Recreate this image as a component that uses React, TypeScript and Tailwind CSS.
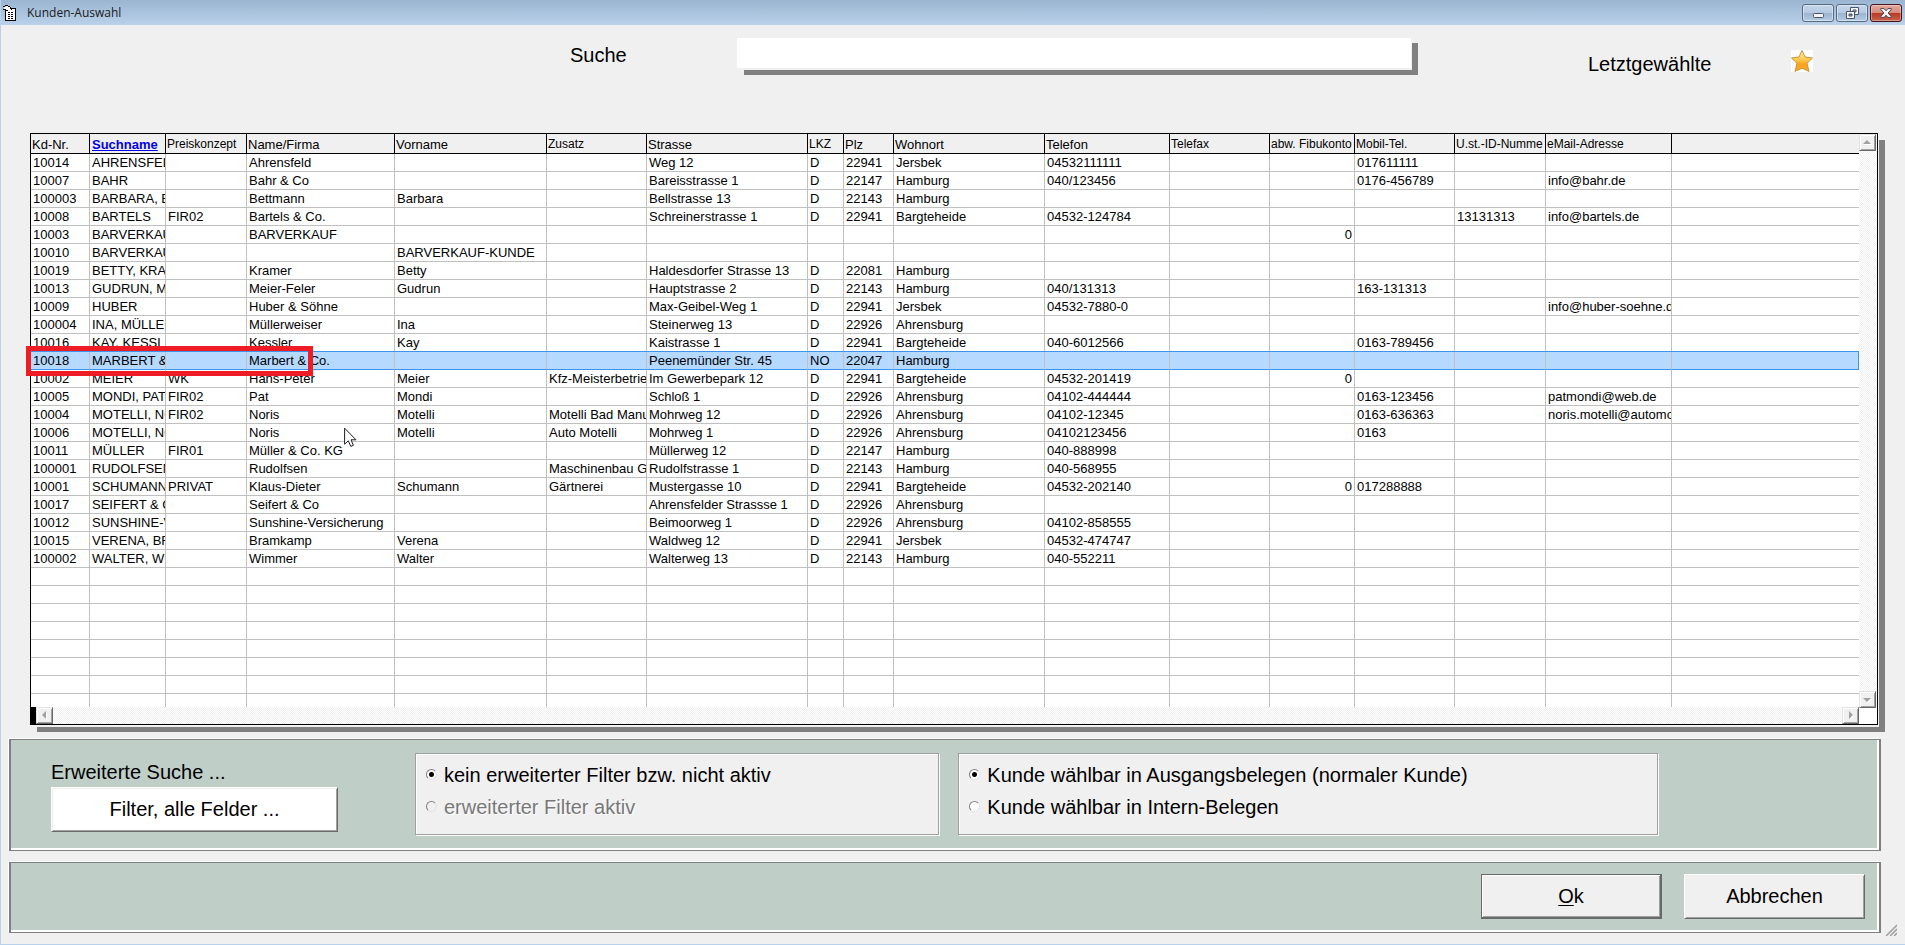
import React from 'react';

type Column = { title: string; width: string; small?: boolean; sorted?: boolean; right?: boolean };

const columns: Column[] = [
  { title: 'Kd-Nr.', width: 'w-[59px]' },
  { title: 'Suchname', width: 'w-[76px]', sorted: true },
  { title: 'Preiskonzept', width: 'w-[81px]', small: true },
  { title: 'Name/Firma', width: 'w-[148px]' },
  { title: 'Vorname', width: 'w-[152px]' },
  { title: 'Zusatz', width: 'w-[100px]', small: true },
  { title: 'Strasse', width: 'w-[161px]' },
  { title: 'LKZ', width: 'w-[36px]', small: true },
  { title: 'Plz', width: 'w-[50px]' },
  { title: 'Wohnort', width: 'w-[151px]' },
  { title: 'Telefon', width: 'w-[125px]' },
  { title: 'Telefax', width: 'w-[100px]', small: true },
  { title: 'abw. Fibukonto', width: 'w-[85px]', small: true, right: true },
  { title: 'Mobil-Tel.', width: 'w-[100px]', small: true },
  { title: 'U.st.-ID-Numme', width: 'w-[91px]', small: true },
  { title: 'eMail-Adresse', width: 'w-[126px]', small: true },
];

const customers: string[][] = [
  ['10014', 'AHRENSFELD', '', 'Ahrensfeld', '', '', 'Weg 12', 'D', '22941', 'Jersbek', '04532111111', '', '', '017611111', '', ''],
  ['10007', 'BAHR', '', 'Bahr & Co', '', '', 'Bareisstrasse 1', 'D', '22147', 'Hamburg', '040/123456', '', '', '0176-456789', '', 'info@bahr.de'],
  ['100003', 'BARBARA, BETTMANN', '', 'Bettmann', 'Barbara', '', 'Bellstrasse 13', 'D', '22143', 'Hamburg', '', '', '', '', '', ''],
  ['10008', 'BARTELS', 'FIR02', 'Bartels & Co.', '', '', 'Schreinerstrasse 1', 'D', '22941', 'Bargteheide', '04532-124784', '', '', '', '13131313', 'info@bartels.de'],
  ['10003', 'BARVERKAUF', '', 'BARVERKAUF', '', '', '', '', '', '', '', '', '0', '', '', ''],
  ['10010', 'BARVERKAUF', '', '', 'BARVERKAUF-KUNDE', '', '', '', '', '', '', '', '', '', '', ''],
  ['10019', 'BETTY, KRAMER', '', 'Kramer', 'Betty', '', 'Haldesdorfer Strasse 13', 'D', '22081', 'Hamburg', '', '', '', '', '', ''],
  ['10013', 'GUDRUN, MEIER', '', 'Meier-Feler', 'Gudrun', '', 'Hauptstrasse 2', 'D', '22143', 'Hamburg', '040/131313', '', '', '163-131313', '', ''],
  ['10009', 'HUBER', '', 'Huber & Söhne', '', '', 'Max-Geibel-Weg 1', 'D', '22941', 'Jersbek', '04532-7880-0', '', '', '', '', 'info@huber-soehne.de'],
  ['100004', 'INA, MÜLLERWEISER', '', 'Müllerweiser', 'Ina', '', 'Steinerweg 13', 'D', '22926', 'Ahrensburg', '', '', '', '', '', ''],
  ['10016', 'KAY, KESSLER', '', 'Kessler', 'Kay', '', 'Kaistrasse 1', 'D', '22941', 'Bargteheide', '040-6012566', '', '', '0163-789456', '', ''],
  ['10018', 'MARBERT & CO', '', 'Marbert & Co.', '', '', 'Peenemünder Str. 45', 'NO', '22047', 'Hamburg', '', '', '', '', '', ''],
  ['10002', 'MEIER', 'WK', 'Hans-Peter', 'Meier', 'Kfz-Meisterbetrieb', 'Im Gewerbepark 12', 'D', '22941', 'Bargteheide', '04532-201419', '', '0', '', '', ''],
  ['10005', 'MONDI, PAT', 'FIR02', 'Pat', 'Mondi', '', 'Schloß 1', 'D', '22926', 'Ahrensburg', '04102-444444', '', '', '0163-123456', '', 'patmondi@web.de'],
  ['10004', 'MOTELLI, NORIS', 'FIR02', 'Noris', 'Motelli', 'Motelli Bad Manufaktur', 'Mohrweg 12', 'D', '22926', 'Ahrensburg', '04102-12345', '', '', '0163-636363', '', 'noris.motelli@automotelli.de'],
  ['10006', 'MOTELLI, NORIS', '', 'Noris', 'Motelli', 'Auto Motelli', 'Mohrweg 1', 'D', '22926', 'Ahrensburg', '04102123456', '', '', '0163', '', ''],
  ['10011', 'MÜLLER', 'FIR01', 'Müller & Co. KG', '', '', 'Müllerweg 12', 'D', '22147', 'Hamburg', '040-888998', '', '', '', '', ''],
  ['100001', 'RUDOLFSEN', '', 'Rudolfsen', '', 'Maschinenbau GmbH', 'Rudolfstrasse 1', 'D', '22143', 'Hamburg', '040-568955', '', '', '', '', ''],
  ['10001', 'SCHUMANN', 'PRIVAT', 'Klaus-Dieter', 'Schumann', 'Gärtnerei', 'Mustergasse 10', 'D', '22941', 'Bargteheide', '04532-202140', '', '0', '017288888', '', ''],
  ['10017', 'SEIFERT & CO', '', 'Seifert & Co', '', '', 'Ahrensfelder Strassse 1', 'D', '22926', 'Ahrensburg', '', '', '', '', '', ''],
  ['10012', 'SUNSHINE-VERSICHERUNG', '', 'Sunshine-Versicherung', '', '', 'Beimoorweg 1', 'D', '22926', 'Ahrensburg', '04102-858555', '', '', '', '', ''],
  ['10015', 'VERENA, BRAMKAMP', '', 'Bramkamp', 'Verena', '', 'Waldweg 12', 'D', '22941', 'Jersbek', '04532-474747', '', '', '', '', ''],
  ['100002', 'WALTER, WIMMER', '', 'Wimmer', 'Walter', '', 'Walterweg 13', 'D', '22143', 'Hamburg', '040-552211', '', '', '', '', ''],
];

const SELECTED = '10018';
const VISIBLE_ROWS = 31;
const rows: string[][] = [
  ...customers,
  ...Array.from({ length: VISIBLE_ROWS - customers.length }, () => columns.map(() => '')),
];

const track = 'bg-[conic-gradient(#fff_25%,#f0f0f0_0_50%,#fff_0_75%,#f0f0f0_0)] bg-[length:2px_2px]';

function DocumentIcon() {
  return (
    <svg width="13" height="17" viewBox="0 0 13 17" shapeRendering="crispEdges" aria-hidden="true">
      <path d="M3 4H12V16H2V5Z" fill="#fff" stroke="#000" strokeWidth="1" transform="translate(.5 -.5)" />
      <path d="M1 2H3V1H6V2H8V4H9V6H6V5H3V4H1Z" fill="#fff" />
      <path d="M0 1H2V2H0ZM2 0H5V1H2ZM5 1H7V2H5ZM7 2H8V4H7ZM0 4H3V5H0ZM3 5H5V6H3ZM8 4H9V5H8Z" fill="#000" />
      <path d="M4.5 7.5H11M4.5 9.5H11M4.5 11.5H11M4.5 13.5H11" stroke="#000" strokeDasharray="2 1" />
    </svg>
  );
}

function WindowButton({ label, close, children }: { label: string; close?: boolean; children: React.ReactNode }) {
  return (
    <button
      type="button"
      aria-label={label}
      className={
        close
          ? 'flex h-[18px] w-8 items-center justify-center rounded-[3px] border border-[#43141a] bg-[linear-gradient(#e5a79c_0%,#d78b7e_48%,#b93822_50%,#c8614c_100%)] shadow-[inset_0_0_0_1px_rgba(255,255,255,0.35)]'
          : 'flex h-[18px] w-8 items-center justify-center rounded-[3px] border border-[#55697f] bg-[linear-gradient(#c3d5ea_0%,#b5cae2_48%,#9ab3cf_50%,#b4cce5_100%)] shadow-[inset_0_0_0_1px_rgba(255,255,255,0.45)]'
      }
    >
      {children}
    </button>
  );
}

function StarIcon() {
  return (
    <svg width="22" height="22" viewBox="0 0 22 22" aria-hidden="true">
      <defs>
        <linearGradient id="star" x1="0" y1="0" x2="0" y2="1">
          <stop offset="0" stopColor="#fff2b8" />
          <stop offset="0.45" stopColor="#fdc84c" />
          <stop offset="0.65" stopColor="#fba31f" />
          <stop offset="1" stopColor="#fca92c" />
        </linearGradient>
      </defs>
      <path
        d="M11 .6 14 7 21.5 8 16 13.2 18 21.4 11 18.2 4 21.4 6 13.2.5 8 8 7Z"
        fill="url(#star)"
        stroke="#c99434"
        strokeWidth="1"
        strokeLinejoin="round"
      />
    </svg>
  );
}

function ScrollButton({ label, points }: { label: string; points: string }) {
  return (
    <button
      type="button"
      aria-label={label}
      className="flex h-[17px] w-[17px] shrink-0 items-center justify-center border border-t-[#e3e3e3] border-r-[#696969] border-b-[#696969] border-l-[#e3e3e3] bg-[#f0f0f0] shadow-[inset_1px_1px_0_#fff,inset_-1px_-1px_0_#a0a0a0]"
    >
      <svg width="9" height="9" viewBox="0 0 9 9" aria-hidden="true">
        <polygon points={points} fill="#fff" transform="translate(1 1)" />
        <polygon points={points} fill="#a0a0a0" />
      </svg>
    </button>
  );
}

function Radio({ name, label, checked, disabled }: { name: string; label: string; checked?: boolean; disabled?: boolean }) {
  return (
    <label
      className={
        disabled
          ? 'flex h-8 items-center gap-[7px] text-[#787878] [text-shadow:1px_1px_0_#fff]'
          : 'flex h-8 items-center gap-[7px]'
      }
    >
      <input
        type="radio"
        name={name}
        defaultChecked={checked}
        disabled={disabled}
        className="mb-[2px] h-[11px] w-[11px] shrink-0 appearance-none rounded-full border border-t-[#808080] border-r-[#e3e3e3] border-b-[#e3e3e3] border-l-[#808080] bg-white checked:bg-[radial-gradient(circle,#000_2px,#fff_3px)] disabled:bg-[#f0f0f0]"
      />
      <span className="whitespace-nowrap">{label}</span>
    </label>
  );
}

const groupBox =
  'h-[82px] min-w-0 border border-[#a0a0a0] bg-[#f0f0f0] pt-[5px] pl-[10px] shadow-[1px_1px_0_#fff,inset_1px_1px_0_#fff]';
const panel =
  'mr-6 ml-2 flex border-x-2 border-y border-[#808080] bg-[#bfcfc8] shadow-[-1px_-1px_0_#fff,inset_-2px_-2px_0_#fff]';
const bevel =
  'border border-t-white border-r-[#696969] border-b-[#696969] border-l-white shadow-[inset_1px_1px_0_#f0f0f0,inset_-1px_-1px_0_#a0a0a0]';

export default function App() {
  return (
    <div className="relative flex min-h-screen flex-col border-b border-l border-[#b9d1ea] bg-[#f0f0f0] font-['Liberation_Sans',Arial,sans-serif] text-xl text-black">
      <header className="flex h-[25px] items-center bg-linear-to-b from-[#9bb5d1] to-[#b9d1ea] pt-px pr-[3px] pl-[2px]">
        <DocumentIcon />
        <h1 className="ml-[11px] grow font-['Open_Sans',sans-serif] text-xs text-[#1a1a1a]">Kunden-Auswahl</h1>
        <div className="flex gap-[2px]">
          <WindowButton label="Minimieren">
            <svg width="11" height="6" viewBox="0 0 11 6" className="mt-1" aria-hidden="true">
              <rect x=".5" y="1.5" width="10" height="4" rx="1" fill="#f4f4f4" stroke="#4c5566" />
            </svg>
          </WindowButton>
          <WindowButton label="Wiederherstellen">
            <svg width="13" height="12" viewBox="0 0 13 12" fill="#f4f4f4" stroke="#4c5566" aria-hidden="true">
              <path fillRule="evenodd" d="M4.5.5h8v7h-8ZM7 3v2h3V3Z" />
              <path fillRule="evenodd" d="M.5 4.5h8v7h-8ZM3 7v2h3V7Z" />
            </svg>
          </WindowButton>
          <WindowButton label="Schließen" close>
            <svg width="12" height="10" viewBox="0 0 12 10" aria-hidden="true">
              <path
                d="M.8.6H4.1L6 2.8 7.9.6h3.3v1L8.1 5l3.1 3.4v1H7.9L6 7.2 4.1 9.4H.8v-1L3.9 5 .8 1.6Z"
                fill="#f6f6f6"
                stroke="#4c4555"
                strokeWidth="1"
              />
            </svg>
          </WindowButton>
        </div>
      </header>

      <div className="grid h-[108px] grid-cols-[569fr_167fr_674fr_177fr_203fr_114fr] items-start whitespace-nowrap">
        <label htmlFor="suche" className="col-start-2 mt-4">
          Suche
        </label>
        <input
          id="suche"
          type="text"
          className="mt-[13px] h-[30px] w-full bg-white px-2 shadow-[1px_2px_0_#f0f0f0,7px_5px_0_#808080,7px_7px_0_#808080] outline-none"
        />
        <span className="col-start-5 mt-[25px]">Letztgewählte</span>
        <button type="button" aria-label="Letztgewählte anzeigen" className="mt-[25px] h-[22px] w-[22px] bg-white">
          <StarIcon />
        </button>
      </div>

      <div className="relative mr-[27px] ml-[29px] flex border border-black bg-white shadow-[1px_2px_0_#f0f0f0,7px_7px_0_#808080]">
        <div className="min-w-0 grow">
          <div className="h-[573px] overflow-hidden">
            <table className="w-full table-fixed border-separate border-spacing-0 text-[13px] leading-[17px]">
              <thead>
                <tr>
                  {columns.map((c) => (
                    <th
                      key={c.title}
                      scope="col"
                      className={`${c.width} ${c.small ? 'text-xs leading-[17px]' : ''} h-5 overflow-hidden border-r border-b border-black bg-[#f0f0f0] pt-[2px] pr-0 pb-0 pl-px text-left font-normal whitespace-nowrap`}
                    >
                      {c.sorted ? (
                        <a href="#suchname" className="pl-px font-bold text-[#0000ee] underline">
                          {c.title}
                        </a>
                      ) : (
                        c.title
                      )}
                    </th>
                  ))}
                  <td className="border-b border-black bg-[#f0f0f0] p-0" />
                </tr>
              </thead>
              <tbody>
                {rows.map((row, r) => {
                  const selected = row[0] === SELECTED;
                  return (
                    <tr
                      key={r}
                      className={selected ? 'bg-[#b5d9ff] shadow-[0_-1px_0_#3c94ea,inset_-1px_-1px_0_#3c94ea]' : ''}
                    >
                      {row.map((value, i) => (
                        <td
                          key={i}
                          className={`${selected ? 'border-b-[#3c94ea]' : 'border-b-[#c0c0c0]'} ${columns[i].right ? 'pr-[2px] text-right' : 'pl-[2px]'} h-[18px] overflow-hidden border-r border-b border-r-[#c0c0c0] py-0 whitespace-nowrap`}
                        >
                          {value}
                        </td>
                      ))}
                      <td
                        className={
                          selected
                            ? 'border-r border-b border-[#3c94ea] p-0'
                            : 'border-b border-[#c0c0c0] p-0'
                        }
                      />
                    </tr>
                  );
                })}
              </tbody>
            </table>
          </div>
          <div className={`flex h-[17px] justify-between border-l-[5px] border-black ${track}`}>
            <ScrollButton label="Nach links" points="6,0 6,8 2,4" />
            <ScrollButton label="Nach rechts" points="3,0 3,8 7,4" />
          </div>
        </div>
        <div className="flex w-[18px] shrink-0 flex-col">
          <div className={`flex grow flex-col justify-between ${track}`}>
            <ScrollButton label="Nach oben" points="0,6 8,6 4,2" />
            <ScrollButton label="Nach unten" points="0,3 8,3 4,7" />
          </div>
          <div className="h-4 bg-white" />
        </div>

        <div className="pointer-events-none absolute top-[212px] -left-[5px] h-[30px] w-[287px] border-[5px] border-[#ee1c25]" />
        <svg className="pointer-events-none absolute top-[293px] left-[313px]" width="13" height="21" viewBox="0 0 13 21" aria-hidden="true">
          <path d="M.6 1.2V17.2L4.3 13.8 6.8 19.4 9.4 18.3 7 12.8H12Z" fill="#fff" stroke="#1c1c28" strokeWidth="1" />
        </svg>
      </div>

      <section className={`mt-[14px] h-28 pt-[13px] pr-[221px] pl-10 ${panel}`}>
        <div className="mr-[77px] w-[287px] shrink-0">
          <h2 className="mt-[5px] h-[29px] leading-7">Erweiterte Suche ...</h2>
          <button type="button" className={`h-[45px] w-full bg-white pb-[2px] ${bevel}`}>
            Filter, alle Felder ...
          </button>
        </div>
        <div role="radiogroup" aria-label="Erweiterter Filter" className={`mr-[19px] flex-[523] ${groupBox}`}>
          <Radio name="filter" label="kein erweiterter Filter bzw. nicht aktiv" checked />
          <Radio name="filter" label="erweiterter Filter aktiv" disabled />
        </div>
        <div role="radiogroup" aria-label="Kundenart" className={`flex-[702] ${groupBox}`}>
          <Radio name="art" label="Kunde wählbar in Ausgangsbelegen (normaler Kunde)" checked />
          <Radio name="art" label="Kunde wählbar in Intern-Belegen" />
        </div>
      </section>

      <footer className={`mt-[11px] mb-[11px] h-[71px] justify-end gap-[22px] pt-[11px] pr-[14px] ${panel}`}>
        <button
          type="button"
          className="h-[45px] w-[181px] border border-r-2 border-b-2 border-[#696969] bg-[#f0f0f0] pb-px shadow-[inset_1px_1px_0_#fff,inset_-1px_-1px_0_#a0a0a0]"
        >
          <span className="underline decoration-1 underline-offset-2">O</span>k
        </button>
        <button type="button" className={`h-[45px] w-[181px] bg-[#f0f0f0] pb-[2px] ${bevel}`}>
          Abbrechen
        </button>
      </footer>

      <svg className="absolute right-2 bottom-2 cursor-se-resize" width="12" height="12" viewBox="0 0 12 12" aria-hidden="true">
        <path d="M1 12 12 1M5 12 12 5M9 12 12 9" stroke="#fff" strokeWidth="1" transform="translate(-1 0)" />
        <path d="M1 12 12 1M5 12 12 5M9 12 12 9" stroke="#a0a0a0" strokeWidth="1.6" />
      </svg>
    </div>
  );
}
